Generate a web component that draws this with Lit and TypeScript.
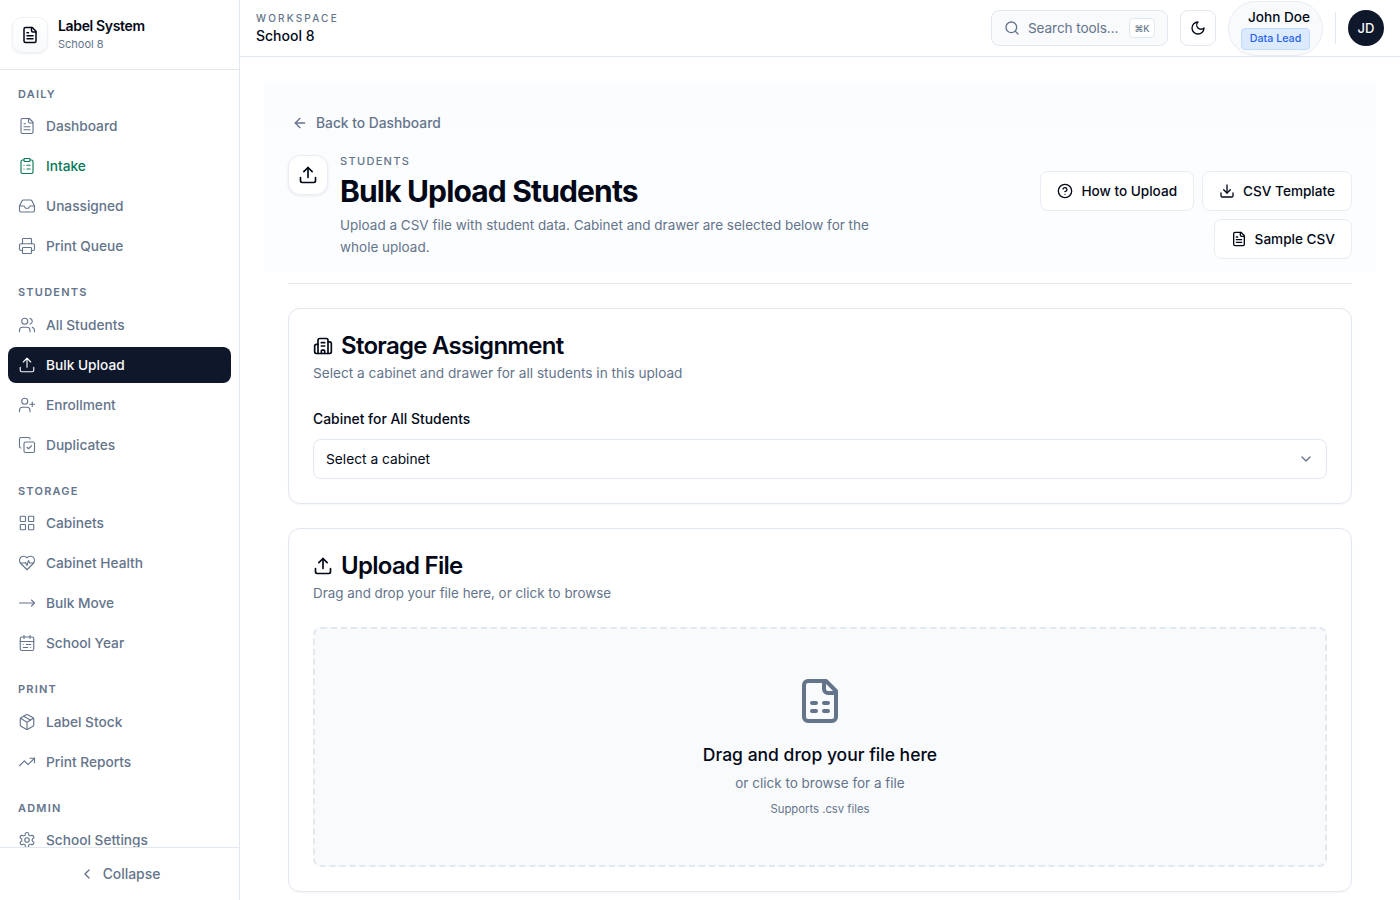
import { LitElement, html, css, svg } from 'lit';
import { customElement } from 'lit/decorators.js';

const icons = {
  fileText: svg`<path d="M15 2H6a2 2 0 0 0-2 2v16a2 2 0 0 0 2 2h12a2 2 0 0 0 2-2V7Z"/><path d="M14 2v4a2 2 0 0 0 2 2h4"/><path d="M10 9H8"/><path d="M16 13H8"/><path d="M16 17H8"/>`,
  clipboardList: svg`<rect x="8" y="2" width="8" height="4" rx="1"/><path d="M16 4h2a2 2 0 0 1 2 2v14a2 2 0 0 1-2 2H6a2 2 0 0 1-2-2V6a2 2 0 0 1 2-2h2"/><path d="M12 11h4"/><path d="M12 16h4"/><path d="M8 11h.01"/><path d="M8 16h.01"/>`,
  inbox: svg`<polyline points="22 12 16 12 14 15 10 15 8 12 2 12"/><path d="M5.45 5.11 2 12v6a2 2 0 0 0 2 2h16a2 2 0 0 0 2-2v-6l-3.45-6.89A2 2 0 0 0 16.76 4H7.24a2 2 0 0 0-1.79 1.11z"/>`,
  printer: svg`<path d="M6 18H4a2 2 0 0 1-2-2v-5a2 2 0 0 1 2-2h16a2 2 0 0 1 2 2v5a2 2 0 0 1-2 2h-2"/><path d="M6 9V3a1 1 0 0 1 1-1h10a1 1 0 0 1 1 1v6"/><rect x="6" y="14" width="12" height="8" rx="1"/>`,
  users: svg`<path d="M16 21v-2a4 4 0 0 0-4-4H6a4 4 0 0 0-4 4v2"/><circle cx="9" cy="7" r="4"/><path d="M22 21v-2a4 4 0 0 0-3-3.87"/><path d="M16 3.13a4 4 0 0 1 0 7.75"/>`,
  upload: svg`<path d="M12 3v12"/><path d="m17 8-5-5-5 5"/><path d="M21 15v4a2 2 0 0 1-2 2H5a2 2 0 0 1-2-2v-4"/>`,
  userPlus: svg`<path d="M16 21v-2a4 4 0 0 0-4-4H6a4 4 0 0 0-4 4v2"/><circle cx="9" cy="7" r="4"/><line x1="19" y1="8" x2="19" y2="14"/><line x1="22" y1="11" x2="16" y2="11"/>`,
  copyCheck: svg`<path d="m12 15 2 2 4-4"/><rect x="8" y="8" width="14" height="14" rx="2"/><path d="M4 16c-1.1 0-2-.9-2-2V4c0-1.1.9-2 2-2h10c1.1 0 2 .9 2 2"/>`,
  grid: svg`<rect x="3" y="3" width="7" height="7" rx="1"/><rect x="14" y="3" width="7" height="7" rx="1"/><rect x="14" y="14" width="7" height="7" rx="1"/><rect x="3" y="14" width="7" height="7" rx="1"/>`,
  heartPulse: svg`<path d="M19 14c1.49-1.46 3-3.21 3-5.5A5.5 5.5 0 0 0 16.5 3c-1.76 0-3 .5-4.5 2-1.5-1.5-2.74-2-4.5-2A5.5 5.5 0 0 0 2 8.5c0 2.3 1.5 4.05 3 5.5l7 7Z"/><path d="M3.22 12H9.5l.5-1 2 4.5 2-7 1.5 3.5h5.27"/>`,
  moveRight: svg`<path d="M18 8l4 4-4 4"/><path d="M2 12h20"/>`,
  calendar: svg`<rect x="3" y="4" width="18" height="18" rx="2"/><path d="M16 2v4"/><path d="M3 10h18"/><path d="M8 2v4"/><path d="M17 14h-6"/><path d="M13 18H7"/><path d="M7 14h.01"/><path d="M17 18h.01"/>`,
  package: svg`<path d="M11 21.73a2 2 0 0 0 2 0l7-4A2 2 0 0 0 21 16V8a2 2 0 0 0-1-1.73l-7-4a2 2 0 0 0-2 0l-7 4A2 2 0 0 0 3 8v8a2 2 0 0 0 1 1.73z"/><path d="M12 22V12"/><path d="m3.3 7 7.703 4.734a2 2 0 0 0 1.994 0L20.7 7"/><path d="m7.5 4.27 9 5.15"/>`,
  trendingUp: svg`<path d="M16 7h6v6"/><path d="m22 7-8.5 8.5-5-5L2 17"/>`,
  settings: svg`<path d="M12.22 2h-.44a2 2 0 0 0-2 2v.18a2 2 0 0 1-1 1.73l-.43.25a2 2 0 0 1-2 0l-.15-.08a2 2 0 0 0-2.73.73l-.22.38a2 2 0 0 0 .73 2.73l.15.1a2 2 0 0 1 1 1.72v.51a2 2 0 0 1-1 1.74l-.15.09a2 2 0 0 0-.73 2.73l.22.38a2 2 0 0 0 2.73.73l.15-.08a2 2 0 0 1 2 0l.43.25a2 2 0 0 1 1 1.73V20a2 2 0 0 0 2 2h.44a2 2 0 0 0 2-2v-.18a2 2 0 0 1 1-1.73l.43-.25a2 2 0 0 1 2 0l.15.08a2 2 0 0 0 2.73-.73l.22-.39a2 2 0 0 0-.73-2.73l-.15-.08a2 2 0 0 1-1-1.74v-.5a2 2 0 0 1 1-1.74l.15-.09a2 2 0 0 0 .73-2.73l-.22-.38a2 2 0 0 0-2.73-.73l-.15.08a2 2 0 0 1-2 0l-.43-.25a2 2 0 0 1-1-1.73V4a2 2 0 0 0-2-2z"/><circle cx="12" cy="12" r="3"/>`,
  chevronLeft: svg`<path d="m15 18-6-6 6-6"/>`,
  chevronDown: svg`<path d="m6 9 6 6 6-6"/>`,
  search: svg`<circle cx="11" cy="11" r="8"/><path d="m21 21-4.3-4.3"/>`,
  moon: svg`<path d="M12 3a6 6 0 0 0 9 9 9 9 0 1 1-9-9Z"/>`,
  arrowLeft: svg`<path d="m12 19-7-7 7-7"/><path d="M19 12H5"/>`,
  help: svg`<circle cx="12" cy="12" r="10"/><path d="M9.09 9a3 3 0 0 1 5.83 1c0 2-3 3-3 3"/><path d="M12 17h.01"/>`,
  download: svg`<path d="M12 15V3"/><path d="M21 15v4a2 2 0 0 1-2 2H5a2 2 0 0 1-2-2v-4"/><path d="m7 10 5 5 5-5"/>`,
  building: svg`<path d="M10 12h4"/><path d="M10 8h4"/><path d="M14 21v-3a1 1 0 0 0-1-1h-2a1 1 0 0 0-1 1v3"/><path d="M6 10H4a2 2 0 0 0-2 2v7a2 2 0 0 0 2 2h16a2 2 0 0 0 2-2V9a2 2 0 0 0-2-2h-2"/><path d="M6 21V5a2 2 0 0 1 2-2h8a2 2 0 0 1 2 2v16"/>`,
  fileSheet: svg`<path d="M15 2H6a2 2 0 0 0-2 2v16a2 2 0 0 0 2 2h12a2 2 0 0 0 2-2V7Z"/><path d="M14 2v4a2 2 0 0 0 2 2h4"/><path d="M8 13h2"/><path d="M14 13h2"/><path d="M8 17h2"/><path d="M14 17h2"/>`,
};

type IconName = keyof typeof icons;

const icon = (name: IconName, size = 18, stroke = 2) => html`<svg
  class="icon"
  xmlns="http://www.w3.org/2000/svg"
  width=${size}
  height=${size}
  viewBox="0 0 24 24"
  fill="none"
  stroke="currentColor"
  stroke-width=${stroke}
  stroke-linecap="round"
  stroke-linejoin="round"
>${icons[name]}</svg>`;

interface NavItem {
  icon: IconName;
  label: string;
  state?: 'active' | 'accent';
}

interface NavSection {
  title: string;
  items: NavItem[];
}

const nav: NavSection[] = [
  {
    title: 'Daily',
    items: [
      { icon: 'fileText', label: 'Dashboard' },
      { icon: 'clipboardList', label: 'Intake', state: 'accent' },
      { icon: 'inbox', label: 'Unassigned' },
      { icon: 'printer', label: 'Print Queue' },
    ],
  },
  {
    title: 'Students',
    items: [
      { icon: 'users', label: 'All Students' },
      { icon: 'upload', label: 'Bulk Upload', state: 'active' },
      { icon: 'userPlus', label: 'Enrollment' },
      { icon: 'copyCheck', label: 'Duplicates' },
    ],
  },
  {
    title: 'Storage',
    items: [
      { icon: 'grid', label: 'Cabinets' },
      { icon: 'heartPulse', label: 'Cabinet Health' },
      { icon: 'moveRight', label: 'Bulk Move' },
      { icon: 'calendar', label: 'School Year' },
    ],
  },
  {
    title: 'Print',
    items: [
      { icon: 'package', label: 'Label Stock' },
      { icon: 'trendingUp', label: 'Print Reports' },
    ],
  },
  {
    title: 'Admin',
    items: [{ icon: 'settings', label: 'School Settings' }],
  },
];

@customElement('app-root')
export class AppRoot extends LitElement {
  static styles = css`
    :host {
      display: block;
      font-family: Inter, 'Liberation Sans', sans-serif;
      color: #020817;
      background: #fff;
    }

    * {
      box-sizing: border-box;
    }

    .icon {
      flex: none;
      display: block;
    }

    .shell {
      display: flex;
      height: 900px;
      overflow: hidden;
    }

    /* sidebar */
    .sidebar {
      width: 240px;
      flex: none;
      display: flex;
      flex-direction: column;
      border-right: 1px solid #e2e8f0;
    }

    .brand {
      height: 70px;
      flex: none;
      display: flex;
      align-items: center;
      gap: 10px;
      padding: 0 12px;
      border-bottom: 1px solid #e2e8f0;
    }

    .brand-mark {
      width: 36px;
      height: 36px;
      display: flex;
      align-items: center;
      justify-content: center;
      background: linear-gradient(#fff, #f8fafc);
      border: 1px solid #eef2f6;
      border-radius: 10px;
      box-shadow: 0 1px 2px rgba(15, 23, 42, 0.08);
    }

    .brand-text {
      margin-bottom: 2px;
    }

    .brand-name {
      font-size: 14px;
      font-weight: 600;
      line-height: 20px;
      letter-spacing: -0.025em;
    }

    .brand-sub {
      font-size: 11px;
      line-height: 16px;
      color: #64748b;
    }

    .nav {
      flex: 1;
      min-height: 0;
      overflow: hidden;
      padding: 15.5px 8px 0;
      display: flex;
      flex-direction: column;
      gap: 20px;
    }

    .nav-title {
      font-size: 11px;
      line-height: 16.5px;
      font-weight: 600;
      letter-spacing: 0.11em;
      text-transform: uppercase;
      color: #64748b;
      padding-left: 10px;
      margin-bottom: 6px;
    }

    .nav-items {
      display: flex;
      flex-direction: column;
      gap: 4px;
    }

    .nav-item {
      height: 36px;
      flex: none;
      display: flex;
      align-items: center;
      gap: 10px;
      padding: 0 10px;
      border-radius: 8px;
      font-size: 13.7px;
      font-weight: 500;
      color: #64748b;
    }

    .nav-item.accent {
      color: #047857;
    }

    .nav-item.active {
      background: #0f172a;
      color: #f8fafc;
    }

    .collapse {
      height: 53px;
      flex: none;
      display: flex;
      align-items: center;
      justify-content: center;
      gap: 8px;
      border-top: 1px solid #e2e8f0;
      font-size: 13.9px;
      font-weight: 500;
      color: #64748b;
    }

    /* top bar */
    .content {
      flex: 1;
      min-width: 0;
      display: flex;
      flex-direction: column;
    }

    .topbar {
      height: 57px;
      flex: none;
      display: flex;
      align-items: center;
      justify-content: space-between;
      padding: 0 16px;
      border-bottom: 1px solid #e2e8f0;
    }

    .workspace-label {
      font-size: 10px;
      line-height: 15px;
      font-weight: 500;
      letter-spacing: 0.22em;
      text-transform: uppercase;
      color: #64748b;
    }

    .workspace-name {
      font-size: 14px;
      line-height: 20px;
      font-weight: 500;
    }

    .top-actions {
      display: flex;
      align-items: center;
      gap: 12px;
    }

    .search {
      width: 177px;
      height: 36px;
      display: flex;
      align-items: center;
      gap: 8px;
      padding: 0 12px;
      background: #f8fafc;
      border: 1px solid #e2e8f0;
      border-radius: 8px;
      font-size: 13.6px;
      letter-spacing: -0.1px;
      color: #64748b;
    }

    .search span {
      flex: 1;
      white-space: nowrap;
    }

    .kbd {
      width: 26px;
      height: 20px;
      flex: none;
      display: flex;
      align-items: center;
      justify-content: center;
      background: #fff;
      border: 1px solid #e2e8f0;
      border-radius: 4px;
      font-size: 9px;
      font-weight: 500;
      letter-spacing: 0;
    }

    .theme {
      width: 36px;
      height: 36px;
      display: flex;
      align-items: center;
      justify-content: center;
      background: #fff;
      border: 1px solid #e2e8f0;
      border-radius: 8px;
    }

    .user {
      width: 95px;
      height: 55px;
      display: flex;
      flex-direction: column;
      align-items: flex-end;
      justify-content: center;
      padding-right: 12px;
      background: #f8fafc;
      border: 1px solid #e8edf3;
      border-radius: 28px;
    }

    .user-name {
      font-size: 13.6px;
      line-height: 20px;
      font-weight: 500;
    }

    .user-role {
      margin-top: 1px;
      height: 22px;
      width: 69px;
      display: flex;
      align-items: center;
      justify-content: center;
      background: #dbeafe;
      border: 1px solid #bfdbfe;
      border-radius: 4px;
      font-size: 10.7px;
      font-weight: 500;
      color: #2563eb;
    }

    .divider {
      width: 1px;
      height: 32px;
      background: #e2e8f0;
    }

    .avatar {
      width: 36px;
      height: 36px;
      display: flex;
      align-items: center;
      justify-content: center;
      border-radius: 50%;
      background: #0f172a;
      color: #f8fafc;
      font-size: 13px;
      font-weight: 500;
    }

    /* page */
    .page {
      flex: 1;
      min-height: 0;
      overflow: hidden;
      padding: 24px;
    }

    .hero {
      padding: 32px 24px 14px;
      background: linear-gradient(#fbfcfe, #fcfdfe);
    }

    .back {
      display: flex;
      align-items: center;
      gap: 8px;
      height: 20px;
      padding-left: 4px;
      font-size: 13.8px;
      font-weight: 500;
      color: #64748b;
    }

    .hero-row {
      margin-top: 22px;
      display: flex;
      align-items: flex-end;
      justify-content: space-between;
    }

    .hero-left {
      display: flex;
      gap: 12px;
      align-items: flex-start;
    }

    .hero-mark {
      width: 40px;
      height: 40px;
      flex: none;
      display: flex;
      align-items: center;
      justify-content: center;
      background: #fff;
      border: 1px solid #e8edf3;
      border-radius: 12px;
      box-shadow: 0 1px 3px rgba(15, 23, 42, 0.08);
    }

    .eyebrow {
      font-size: 11px;
      line-height: 12px;
      font-weight: 500;
      letter-spacing: 0.12em;
      text-transform: uppercase;
      color: #64748b;
    }

    h1 {
      margin: 6px 0 0;
      font-size: 30px;
      line-height: 36px;
      font-weight: 700;
      letter-spacing: -0.028em;
    }

    .hero-sub {
      margin: 5px 0 0;
      max-width: 560px;
      font-size: 13.5px;
      line-height: 22px;
      color: #64748b;
    }

    .hero-actions {
      width: 320px;
      display: flex;
      flex-wrap: wrap;
      justify-content: flex-end;
      gap: 8px;
      margin-bottom: -1px;
    }

    .btn {
      height: 40px;
      display: flex;
      align-items: center;
      gap: 8px;
      padding: 0 16px;
      background: #fff;
      border: 1px solid #e8edf3;
      border-radius: 8px;
      font-size: 13.6px;
      font-weight: 500;
    }

    .body {
      margin-top: 11px;
      padding: 0 24px;
    }

    .rule {
      height: 1px;
      background: #e2e8f0;
    }

    .card {
      margin-top: 24px;
      padding: 24px;
      background: #fff;
      border: 1px solid #e2e8f0;
      border-radius: 12px;
      box-shadow: 0 1px 2px rgba(15, 23, 42, 0.04);
    }

    .card-title {
      display: flex;
      align-items: center;
      gap: 8px;
      padding-top: 1px;
      font-size: 24px;
      line-height: 24px;
      font-weight: 600;
      letter-spacing: -0.03em;
    }

    .card-sub {
      margin-top: 5px;
      font-size: 13.65px;
      line-height: 20px;
      color: #64748b;
    }

    .card-sub.tight {
      font-size: 13.4px;
    }

    .field-label {
      margin-top: 26px;
      font-size: 13.9px;
      line-height: 20px;
      font-weight: 500;
    }

    .select {
      margin-top: 10px;
      height: 40px;
      display: flex;
      align-items: center;
      justify-content: space-between;
      padding: 0 12px;
      background: #fff;
      border: 1px solid #e2e8f0;
      border-radius: 8px;
      font-size: 13.75px;
    }

    .select .icon {
      color: #64748b;
    }

    .drop {
      margin-top: 24px;
      height: 240px;
      display: flex;
      flex-direction: column;
      align-items: center;
      justify-content: center;
      background: #f8fafc;
      border: 2px dashed #e2e8f0;
      border-radius: 8px;
    }

    .drop-icon {
      color: #64748b;
    }

    .drop-title {
      margin-top: 16px;
      font-size: 17.5px;
      line-height: 28px;
      font-weight: 500;
    }

    .drop-sub {
      margin-top: 4px;
      font-size: 13.5px;
      line-height: 20px;
      color: #64748b;
    }

    .drop-note {
      margin-top: 8px;
      font-size: 11.3px;
      line-height: 16px;
      color: #64748b;
    }
  `;

  private renderSection(section: NavSection) {
    return html`
      <section>
        <div class="nav-title">${section.title}</div>
        <div class="nav-items">
          ${section.items.map(
            (item) => html`
              <div class="nav-item ${item.state ?? ''}">
                ${icon(item.icon, 18, 1.5)}
                <span>${item.label}</span>
              </div>
            `
          )}
        </div>
      </section>
    `;
  }

  render() {
    return html`
      <div class="shell">
        <aside class="sidebar">
          <div class="brand">
            <div class="brand-mark">${icon('fileText', 18)}</div>
            <div class="brand-text">
              <div class="brand-name">Label System</div>
              <div class="brand-sub">School 8</div>
            </div>
          </div>
          <nav class="nav">${nav.map((s) => this.renderSection(s))}</nav>
          <div class="collapse">${icon('chevronLeft', 16)}<span>Collapse</span></div>
        </aside>

        <div class="content">
          <header class="topbar">
            <div>
              <div class="workspace-label">Workspace</div>
              <div class="workspace-name">School 8</div>
            </div>
            <div class="top-actions">
              <div class="search">
                ${icon('search', 16)}
                <span>Search tools...</span>
                <div class="kbd">⌘K</div>
              </div>
              <div class="theme">${icon('moon', 16)}</div>
              <div class="user">
                <div class="user-name">John Doe</div>
                <div class="user-role">Data Lead</div>
              </div>
              <div class="divider"></div>
              <div class="avatar">JD</div>
            </div>
          </header>

          <main class="page">
            <div class="hero">
              <div class="back">${icon('arrowLeft', 16)}<span>Back to Dashboard</span></div>
              <div class="hero-row">
                <div class="hero-left">
                  <div class="hero-mark">${icon('upload', 20)}</div>
                  <div>
                    <div class="eyebrow">Students</div>
                    <h1>Bulk Upload Students</h1>
                    <p class="hero-sub">
                      Upload a CSV file with student data. Cabinet and drawer are selected below for
                      the whole upload.
                    </p>
                  </div>
                </div>
                <div class="hero-actions">
                  <div class="btn">${icon('help', 16)}<span>How to Upload</span></div>
                  <div class="btn">${icon('download', 16)}<span>CSV Template</span></div>
                  <div class="btn">${icon('fileText', 16)}<span>Sample CSV</span></div>
                </div>
              </div>
            </div>

            <div class="body">
              <div class="rule"></div>
              <div class="card">
                <div class="card-title">${icon('building', 20)}Storage Assignment</div>
                <div class="card-sub">Select a cabinet and drawer for all students in this upload</div>
                <div class="field-label">Cabinet for All Students</div>
                <div class="select"><span>Select a cabinet</span>${icon('chevronDown', 16)}</div>
              </div>

              <div class="card">
                <div class="card-title">${icon('upload', 20)}Upload File</div>
                <div class="card-sub tight">Drag and drop your file here, or click to browse</div>
                <div class="drop">
                  <div class="drop-icon">${icon('fileSheet', 48)}</div>
                  <div class="drop-title">Drag and drop your file here</div>
                  <div class="drop-sub">or click to browse for a file</div>
                  <div class="drop-note">Supports .csv files</div>
                </div>
              </div>
            </div>
          </main>
        </div>
      </div>
    `;
  }
}
